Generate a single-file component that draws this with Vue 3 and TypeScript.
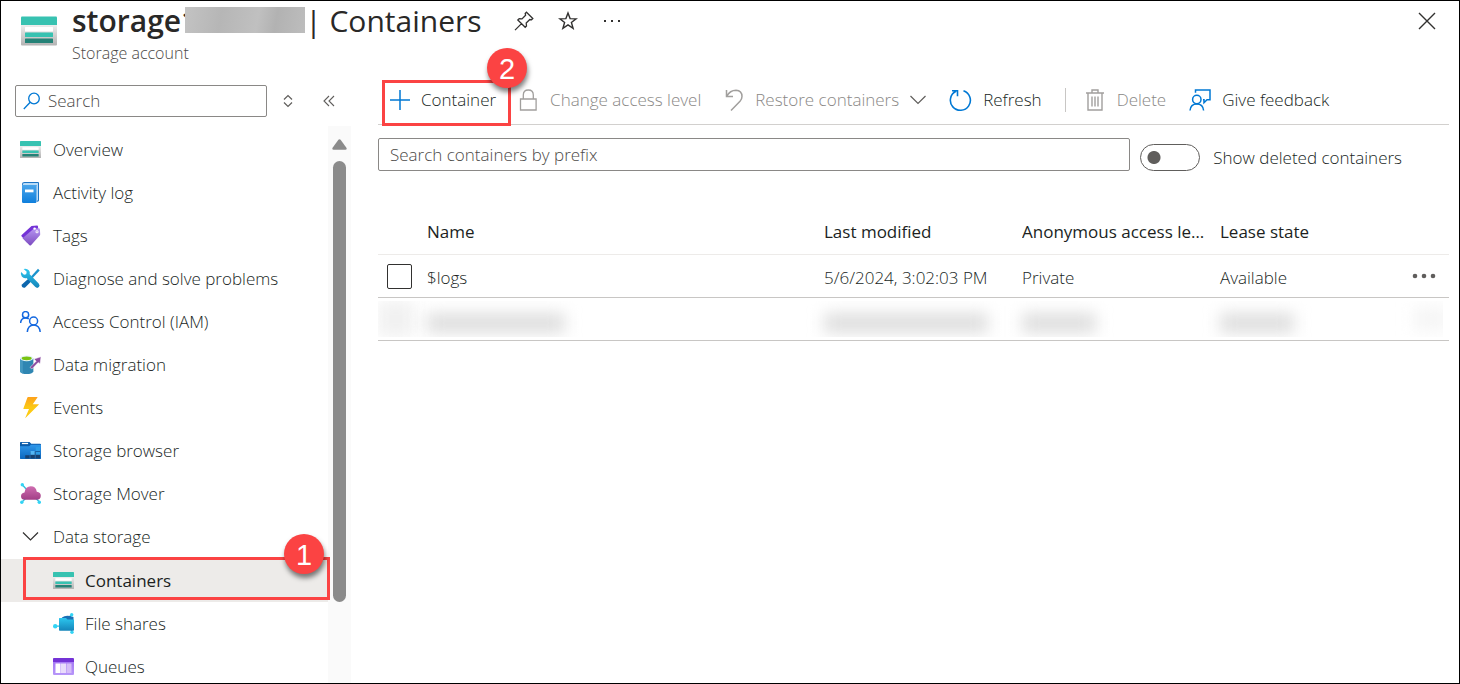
<script setup lang="ts">
import { ref } from 'vue'

interface NavItem {
  label: string
  icon: string
}

interface ContainerRow {
  name: string
  modified: string
  access: string
  lease: string
}

const navItems: NavItem[] = [
  { label: 'Overview', icon: 'storage' },
  { label: 'Activity log', icon: 'log' },
  { label: 'Tags', icon: 'tag' },
  { label: 'Diagnose and solve problems', icon: 'tools' },
  { label: 'Access Control (IAM)', icon: 'people' },
  { label: 'Data migration', icon: 'migration' },
  { label: 'Events', icon: 'bolt' },
  { label: 'Storage browser', icon: 'browser' },
  { label: 'Storage Mover', icon: 'mover' },
]

const storageItems: NavItem[] = [
  { label: 'Containers', icon: 'storage' },
  { label: 'File shares', icon: 'shares' },
  { label: 'Queues', icon: 'queues' },
]

const rows: ContainerRow[] = [
  { name: '$logs', modified: '5/6/2024, 3:02:03 PM', access: 'Private', lease: 'Available' },
]

const current = ref('Containers')
const expanded = ref(true)
const menuFilter = ref('')
const prefix = ref('')
const showDeleted = ref(false)
const selected = ref<string[]>([])
</script>

<template>
  <div class="blade">
    <svg class="sprite" aria-hidden="true">
      <defs>
        <linearGradient id="g-grey" x1="0" y1="0" x2="0" y2="1">
          <stop offset="0" stop-color="#f0f0f0" /><stop offset="1" stop-color="#b3b3b3" />
        </linearGradient>
        <linearGradient id="g-blue" x1="0" y1="0" x2="0" y2="1">
          <stop offset="0" stop-color="#4aa5ea" /><stop offset="1" stop-color="#0f7fdc" />
        </linearGradient>
        <linearGradient id="g-violet" x1="0" y1="0" x2="0" y2="1">
          <stop offset="0" stop-color="#b796f2" /><stop offset="1" stop-color="#7c4bc0" />
        </linearGradient>
        <linearGradient id="g-lilac" x1="0" y1="0" x2="0" y2="1">
          <stop offset="0" stop-color="#a67af4" /><stop offset="1" stop-color="#b796f9" />
        </linearGradient>
        <linearGradient id="g-cyan" x1="0" y1="0" x2="0" y2="1">
          <stop offset="0" stop-color="#2cc6ee" /><stop offset="1" stop-color="#1585ba" />
        </linearGradient>
        <linearGradient id="g-folder" x1="0" y1="0" x2="0" y2="1">
          <stop offset="0" stop-color="#2e96ea" /><stop offset="1" stop-color="#0b66bd" />
        </linearGradient>
        <linearGradient id="g-cloud" x1="0" y1="0" x2="0" y2="1">
          <stop offset="0" stop-color="#cf6db0" /><stop offset="1" stop-color="#a23f86" />
        </linearGradient>
        <linearGradient id="g-bolt" x1="0" y1="0" x2="0" y2="1">
          <stop offset="0" stop-color="#fea11b" /><stop offset=".5" stop-color="#fbc915" /><stop offset="1" stop-color="#ffcb12" />
        </linearGradient>
      </defs>
      <symbol id="i-storage" viewBox="0 0 36 36">
        <path d="M0 11h36v20.500q0 1-1 1H1q-1 0-1-1z" fill="url(#g-grey)" />
        <path d="M1 3.500h34q1 0 1 1V12H0V4.500q0-1 1-1z" fill="#37c2b1" />
        <rect x="4" y="14" width="28" height="4.500" rx=".6" fill="#fff" />
        <rect x="4" y="19.500" width="28" height="4.500" rx=".6" fill="#37c2b1" />
        <rect x="4" y="25.500" width="28" height="4.500" rx=".6" fill="#258277" />
      </symbol>
      <symbol id="i-log" viewBox="0 0 21 21">
        <path d="M4.500 0H18q1 0 1 1v17.500q0 1-1 1l-1.500.5V3.500H2V2Q2 0 4.500 0z" fill="#1c74c4" />
        <path d="M4.500.9H18v17.400l-1.400.7V3H2.700Q2.500.9 4.500.9z" fill="#b9dcf7" />
        <path d="M2 3h14.300v17.200q0 .8-.8.8H3.300Q2 21 2 19.700z" fill="url(#g-blue)" />
        <rect x="5" y="7.500" width="8.500" height="2.800" fill="#fff" />
      </symbol>
      <symbol id="i-tag" viewBox="0 0 21 21">
        <path d="M11.500 1 17 .5q1 0 1 1l.3 4.500L7 17.500l-5.500-6.300q-.5-.7.200-1.200z" fill="#7433d6" />
        <path d="M13.700 3.800 18.800 3.300q1 0 1.100 1l.3 5q0 .8-.5 1.300L11 20.200q-.8.7-1.500 0L2.500 13.300z" fill="url(#g-violet)" />
        <circle cx="14.600" cy="3.600" r="1.200" fill="#fff" />
        <circle cx="17" cy="6.800" r="1.500" fill="#fff" />
        <circle cx="17" cy="6.800" r=".6" fill="#8c58d0" />
      </symbol>
      <symbol id="i-tools" viewBox="0 0 21 21">
        <path d="m18 .8 1.700 1.600-8 8.700-1.600-1.500z" fill="#1b93cd" />
        <path d="m8.900 10.300 2.700 2.700-6.200 6.300q-1.500 1.200-3.200-.2-1.300-1.600 0-2.900z" fill="#0c66ad" />
        <path d="M3.600.9Q6.800 0 8.800 2.200q1.500 1.700.9 4.100l9 9.100q1.700 2 .2 3.700-1.700 1.600-3.500 0L6.500 10Q3.800 10.800 1.800 8.500.2 6.500 1.100 4l2.900 2.700 2.200-.5.500-2.400z" fill="url(#g-cyan)" />
      </symbol>
      <symbol id="i-people" viewBox="0 0 21 21">
        <g fill="none" stroke="#1468e0" stroke-width="1.500">
          <circle cx="5.600" cy="3.700" r="3.100" />
          <path d="M.6 12Q1 7 5.600 7q2 0 3.200 1" />
          <circle cx="13.600" cy="10" r="4" />
          <path d="M7.300 21q.7-7 6.400-7t6.500 7" />
        </g>
      </symbol>
      <symbol id="i-migration" viewBox="0 0 22 21">
        <path d="M0 4v13.800Q1.500 20.500 7 20.500t7-2.700V4z" fill="#2f86b2" />
        <path d="M0 4v13.800q.8 1.500 3 2.100V4z" fill="#4498c0" />
        <ellipse cx="7" cy="4" rx="7" ry="3" fill="#e6f4f9" />
        <ellipse cx="7" cy="4" rx="5.300" ry="2" fill="#7ac312" />
        <path d="m10.500 13.500 6.500-6.500-2.300-2.200L22 2.400l-1 7.200-2-1.200-6.500 6.800z" fill="#8b4aa0" stroke="#fff" stroke-width=".5" />
      </symbol>
      <symbol id="i-bolt" viewBox="0 0 21 21">
        <path d="M8 0h9.200q.6 0 .2.600L12.800 7.200h5.700q.7 0 .2.600L5.700 20.700q-.6.5-.3-.2L9 12H3.800q-.6 0-.4-.5L7.400.4Q7.500 0 8 0z" fill="url(#g-bolt)" />
      </symbol>
      <symbol id="i-browser" viewBox="0 0 22 21">
        <path d="M.8 1.500H10l1.800 2H21q1 0 1 .8V18H0V2.300q0-.8.800-.8z" fill="#0b5cab" />
        <rect x="2" y="2.500" width="6.500" height="1.300" fill="#fff" />
        <path d="M0 6h9.500l2-1.500H22v14q0 1-1 1H1q-1 0-1-1z" fill="url(#g-folder)" />
        <path d="M5.500 15.500h15.500v3.500H5.500zM11 11.500h10v4H11z" fill="#17406f" />
        <path d="M11 11h4.500v4H11z" fill="#52b6f5" />
        <path d="M16.500 6.500H21V11h-4.500zM16.500 12H21v3h-4.500z" fill="#2d9ce6" />
        <path d="M10.500 15.500v3.500M16 11.500v7.500" stroke="#2d79bd" stroke-width=".8" />
      </symbol>
      <symbol id="i-mover" viewBox="0 0 21 21">
        <path d="m2.500 2 5 5.500M2 19l6-6M19.500 19l-6-6" stroke="#32bedd" stroke-width="1.400" />
        <circle cx="2.300" cy="1.800" r="1.700" fill="#32d4f5" />
        <circle cx="1.800" cy="19.300" r="1.700" fill="#32d4f5" />
        <circle cx="19.300" cy="19.300" r="1.700" fill="#32d4f5" />
        <path d="M5 16.800q-4 0-4-3.600 0-3 3.500-3.600Q5.500 3.300 10.800 3.300q5 0 6 5.400 4 .6 4 4.100 0 4-4.300 4z" fill="url(#g-cloud)" />
      </symbol>
      <symbol id="i-shares" viewBox="0 0 21 21">
        <path d="M2 13.200h5M18.500 16v4M14 6l4.500-4" stroke="#32bedd" stroke-width="1.300" />
        <path d="M9 4.500q4-3 11.500-.5v4H8z" fill="#1a6fb5" />
        <circle cx="18.700" cy="1.700" r="1.700" fill="#32d4f5" />
        <circle cx="2.200" cy="13.200" r="2.200" fill="#32d4f5" />
        <circle cx="19" cy="19.300" r="1.700" fill="#32d4f5" />
        <path d="M6.500 5H13l1.500 1.500H21V17q0 .7-.8.700H6.800q-.8 0-.8-.7V5.500q0-.5.500-.5z" fill="url(#g-cyan)" />
      </symbol>
      <symbol id="i-queues" viewBox="0 0 21 21">
        <path d="M0 6h21v12q0 1-1 1H1q-1 0-1-1z" fill="url(#g-lilac)" />
        <path d="M.8 2H20q1 0 1 .8V6H0V2.800Q0 2 .8 2z" fill="#7433d6" />
        <rect x="2.500" y="7.500" width="5" height="9.500" fill="#fff" />
        <rect x="8" y="7.500" width="5" height="9.500" fill="#e9dcfb" />
        <rect x="13.500" y="7.500" width="5" height="9.500" fill="#d6bdf8" />
      </symbol>
    </svg>

    <header class="head">
      <svg class="head-icon" aria-hidden="true"><use href="#i-storage" /></svg>
      <div class="head-text">
        <div class="title-line">
          <h1 class="title"><strong>storage1</strong><span class="mask"></span><span>| Containers</span></h1>
          <div class="title-actions">
            <button type="button" class="plain" aria-label="Pin">
              <svg width="20" height="20" viewBox="0 0 20 20" fill="none" stroke="#323130" stroke-width="1.300">
                <path d="M12.500 1.200 18.800 7.500 17.500 8.800 15.800 8.500 12.200 12.100 12.500 15 11.200 16.300 3.800 8.900 5.200 7.600 8 7.900 11.600 4.200 11.200 2.500zM7.500 12.600 1 19.100" />
              </svg>
            </button>
            <button type="button" class="plain" aria-label="Favorite">
              <svg width="20" height="20" viewBox="0 0 20 20" fill="none" stroke="#323130" stroke-width="1.400">
                <path d="M10 2l2.100 5.600 6 .2-4.700 3.700 1.700 5.800-5.100-3.400-5.100 3.400 1.700-5.800L1.900 7.800l6-.2z" />
              </svg>
            </button>
            <button type="button" class="plain" aria-label="More actions">
              <svg width="20" height="20" viewBox="0 0 20 20" fill="#323130">
                <path d="M2 9h2v2H2zM9 9h2v2H9zM16 9h2v2h-2z" />
              </svg>
            </button>
          </div>
        </div>
        <p class="subtitle">Storage account</p>
      </div>
      <button type="button" class="plain close" aria-label="Close">
        <svg width="18" height="18" viewBox="0 0 18 18" stroke="#323130" stroke-width="1.400">
          <path d="M1 1l16 16M17 1L1 17" />
        </svg>
      </button>
    </header>

    <div class="body">
      <aside class="side">
        <div class="side-tools">
          <label class="side-search">
            <svg width="18" height="18" viewBox="0 0 18 18" fill="none" stroke="#0078d4" stroke-width="1.300">
              <circle cx="11" cy="6.500" r="5.300" /><path d="M7.200 10.300.8 17" />
            </svg>
            <input v-model="menuFilter" type="text" placeholder="Search" aria-label="Search menu" />
          </label>
          <button type="button" class="plain" aria-label="Expand or collapse all">
            <svg width="12" height="14" viewBox="0 0 12 14" fill="none" stroke="#605e5c" stroke-width="1.200">
              <path d="M2 5.500 6 1.500l4 4M2 8.500l4 4 4-4" />
            </svg>
          </button>
          <button type="button" class="plain collapse" aria-label="Collapse menu">
            <svg width="12" height="12" viewBox="0 0 12 12" fill="none" stroke="#605e5c" stroke-width="1.100">
              <path d="M6 1 1 6l5 5M11 1 6 6l5 5" />
            </svg>
          </button>
        </div>

        <div class="side-scroll">
          <nav class="nav" aria-label="Storage account menu">
            <a v-for="item in navItems" :key="item.label" href="#" class="nav-item" @click.prevent="current = item.label">
              <svg class="nav-icon" aria-hidden="true"><use :href="'#i-' + item.icon" /></svg>
              <span>{{ item.label }}</span>
            </a>
            <button type="button" class="nav-item" :aria-expanded="expanded" @click="expanded = !expanded">
              <svg class="nav-icon" viewBox="0 0 21 21" fill="none" stroke="#323130" stroke-width="1.200">
                <path d="M3 6.500l7.500 7.500L18 6.500" />
              </svg>
              <span>Data storage</span>
            </button>
            <div v-if="expanded" class="nav-group">
              <a
                v-for="item in storageItems"
                :key="item.label"
                href="#"
                class="nav-item nested"
                :class="{ active: current === item.label }"
                @click.prevent="current = item.label"
              >
                <svg class="nav-icon" aria-hidden="true"><use :href="'#i-' + item.icon" /></svg>
                <span>{{ item.label }}</span>
                <span v-if="item.label === 'Containers'" class="callout callout-nav"><b class="step">1</b></span>
              </a>
            </div>
          </nav>
          <div class="scrollbar" aria-hidden="true">
            <svg width="15" height="11" viewBox="0 0 15 11">
              <path d="M6.400.8q1.100-1.200 2.200 0l5.800 8q.9 1.900-1 1.900H1.600q-1.900 0-1-1.900z" fill="#8b8b8b" />
            </svg>
            <div class="thumb"></div>
          </div>
        </div>
      </aside>

      <main class="main">
        <div class="toolbar" role="toolbar" aria-label="Container commands">
          <button type="button" class="cmd">
            <svg width="20" height="20" viewBox="0 0 20 20" stroke="#0078d4" stroke-width="1.500"><path d="M10 0v20M0 10h20" /></svg>
            Container
            <span class="callout callout-cmd"><b class="step">2</b></span>
          </button>
          <button type="button" class="cmd" disabled>
            <svg width="20" height="22" viewBox="0 0 20 22" fill="none" stroke="#a19f9d" stroke-width="1.300">
              <path d="M1.500 10h15.600v11H1.500zM4.300 10V6q0-5 5-5t5 5v4" />
            </svg>
            Change access level
          </button>
          <button type="button" class="cmd" disabled>
            <svg width="20" height="22" viewBox="0 0 20 22" fill="none" stroke="#a19f9d" stroke-width="1.500">
              <path d="M2.500 1v6.500H9M2.800 7.200Q6 1.200 12 1.200q6 .3 6 6.300 0 2.500-2 4.800L7 21.500" />
            </svg>
            Restore containers
            <svg width="16" height="10" viewBox="0 0 16 10" fill="none" stroke="#605e5c" stroke-width="1.200">
              <path d="M.5 1 8 8.500 15.500 1" />
            </svg>
          </button>
          <button type="button" class="cmd">
            <svg width="23" height="23" viewBox="0 0 23 23" fill="none" stroke="#0078d4" stroke-width="1.600">
              <path d="M14.500 1.800A10 10 0 1 1 7 2.300M3 1.800h5.500v5.500" />
            </svg>
            Refresh
          </button>
          <span class="divider"></span>
          <button type="button" class="cmd" disabled>
            <svg width="20" height="22" viewBox="0 0 20 22" fill="none" stroke="#a19f9d" stroke-width="1.400">
              <path d="M0 4h18M2 4v17h14V4M6 4V1h6v3M6 7.500v10M9 7.500v10M12 7.500v10" />
            </svg>
            Delete
          </button>
          <button type="button" class="cmd">
            <svg width="22" height="22" viewBox="0 0 22 22" fill="none" stroke="#0078d4" stroke-width="1.500">
              <circle cx="7.800" cy="10.500" r="4.200" />
              <path d="M1 21.500q.6-6.500 6.800-6.500t6.800 6.500M6.500 3.800V1H21v9.800h-3l-3 2.900v-2.900h-1" />
            </svg>
            Give feedback
          </button>
        </div>

        <div class="filters">
          <input v-model="prefix" class="prefix" type="text" placeholder="Search containers by prefix" aria-label="Search containers by prefix" />
          <label class="switch">
            <input v-model="showDeleted" type="checkbox" role="switch" />
            <span>Show deleted containers</span>
          </label>
        </div>

        <table class="grid">
          <colgroup>
            <col class="c-check" /><col /><col class="c-mid" /><col class="c-mid" /><col class="c-lease" /><col class="c-more" />
          </colgroup>
          <thead>
            <tr>
              <th></th>
              <th scope="col">Name</th>
              <th scope="col">Last modified</th>
              <th scope="col">Anonymous access level</th>
              <th scope="col">Lease state</th>
              <th></th>
            </tr>
          </thead>
          <tbody>
            <tr v-for="row in rows" :key="row.name">
              <td class="check"><input v-model="selected" type="checkbox" :value="row.name" :aria-label="'Select ' + row.name" /></td>
              <td class="value">{{ row.name }}</td>
              <td class="value">{{ row.modified }}</td>
              <td class="value">{{ row.access }}</td>
              <td class="value">{{ row.lease }}</td>
              <td class="more">
                <button type="button" class="plain" aria-label="Row actions">
                  <svg width="24" height="6" viewBox="0 0 24 6" fill="#605e5c">
                    <circle cx="3" cy="3" r="2.300" /><circle cx="12" cy="3" r="2.300" /><circle cx="21" cy="3" r="2.300" />
                  </svg>
                </button>
              </td>
            </tr>
            <tr>
              <td><div class="clip clip-start"><i class="blob box"></i></div></td>
              <td><div class="clip"><i class="blob name"></i></div></td>
              <td><div class="clip"><i class="blob date"></i></div></td>
              <td><div class="clip"><i class="blob word"></i></div></td>
              <td><div class="clip"><i class="blob word"></i></div></td>
              <td><div class="clip clip-end"><i class="blob dots"></i></div></td>
            </tr>
          </tbody>
        </table>
      </main>
    </div>
  </div>
</template>

<style>
body {
  margin: 0;
  background: #fff;
}
</style>

<style scoped>
.blade {
  box-sizing: border-box;
  height: 100vh;
  display: flex;
  flex-direction: column;
  overflow: hidden;
  border: 1px solid #000;
  background: #fff;
  color: #201f1e;
  font-family: "Segoe UI", "Open Sans", "Noto Sans", sans-serif;
  font-size: 17px;
  font-weight: 300;
  line-height: 24px;
}
.sprite {
  position: absolute;
  width: 0;
  height: 0;
}
svg {
  display: block;
  flex: none;
}
button,
input {
  font: inherit;
  color: inherit;
}
.plain {
  display: flex;
  padding: 0;
  border: 0;
  background: none;
}

.head {
  display: flex;
  align-items: flex-start;
  flex: none;
  height: 75px;
  padding: 0 23px 0 20px;
}
.head-icon {
  width: 36px;
  height: 36px;
  margin-top: 12px;
}
.head-text {
  flex: 1;
  margin-left: 15px;
}
.title-line {
  display: flex;
  align-items: center;
  height: 40px;
}
.title {
  display: flex;
  align-items: center;
  margin: 0;
  font-size: 30px;
  line-height: 40px;
  font-weight: 400;
  color: #292827;
  white-space: nowrap;
}
.title strong {
  font-weight: 600;
}
.mask {
  position: relative;
  width: 120px;
  height: 26px;
  margin: 0 0 2px -13px;
  background: linear-gradient(100deg, #c3c3c3, #b6b6b6 30%, #c0c0c0 60%, #b2b2b2 75%, #bdbdbd);
}
.title-actions {
  display: flex;
  gap: 24px;
  margin-left: 32px;
}
.subtitle {
  margin: 0;
  font-size: 16px;
  color: #4c4a48;
}
.close {
  margin-top: 11px;
}

.body {
  flex: 1;
  min-height: 0;
  display: flex;
}
.side {
  flex: none;
  width: 350px;
  display: flex;
  flex-direction: column;
}
.side-tools {
  flex: none;
  display: flex;
  align-items: center;
  height: 50px;
  padding-left: 14px;
}
.side-search {
  box-sizing: border-box;
  display: flex;
  align-items: center;
  gap: 7px;
  width: 252px;
  height: 32px;
  margin-right: 15px;
  padding: 0 7px;
  border: 1px solid #8a8886;
  border-radius: 2px;
}
.side-search input {
  flex: 1;
  min-width: 0;
  padding: 0;
  border: 0;
  outline: 0;
  background: none;
}
input::placeholder {
  color: #4c4a48;
  opacity: 1;
}
.collapse {
  margin-left: 29px;
}
.side-scroll {
  flex: 1;
  min-height: 0;
  display: flex;
}
.nav {
  flex: 1;
  padding-top: 2px;
}
.nav-item {
  position: relative;
  box-sizing: border-box;
  display: flex;
  align-items: center;
  gap: 12px;
  width: 100%;
  height: 43px;
  padding: 0 0 0 19px;
  border: 0;
  background: none;
  color: inherit;
  text-align: left;
  text-decoration: none;
}
.nav-icon {
  width: 21px;
  height: 21px;
}
.nav-group {
  padding-top: 1px;
}
.nested {
  gap: 11px;
  padding-left: 52px;
}
.active {
  background: #edebe9;
  font-weight: 500;
}
.scrollbar {
  flex: none;
  width: 23px;
  box-sizing: border-box;
  display: flex;
  flex-direction: column;
  align-items: center;
  gap: 11px;
  padding-top: 13px;
  background: #fafafa;
}
.thumb {
  width: 13px;
  height: 81%;
  border-radius: 7px;
  background: #8b8b8b;
}

.callout {
  position: absolute;
  box-sizing: border-box;
  border: 3px solid #fb4343;
  pointer-events: none;
}
.callout-nav {
  inset: -2px -2px 2px 22px;
  z-index: 2;
}
.callout-cmd {
  inset: 4px -15px -2px -8px;
}
.step {
  position: absolute;
  top: -26px;
  right: 3px;
  width: 40px;
  height: 40px;
  border-radius: 50%;
  background: #fb4343;
  box-shadow: 1px 4px 5px rgba(0, 0, 0, 0.5);
  color: #fff;
  font: 400 29px/42px "Liberation Sans", Arial, sans-serif;
  text-align: center;
}
.callout-cmd .step {
  top: -35px;
  right: -19px;
}

.main {
  flex: 1;
  min-width: 0;
  padding: 0 10px 0 27px;
}
.toolbar {
  display: flex;
  align-items: center;
  height: 48px;
  padding-left: 12px;
  border-bottom: 1px solid #d2d0ce;
}
.cmd {
  position: relative;
  display: flex;
  align-items: center;
  gap: 11px;
  height: 48px;
  margin-right: 23px;
  padding: 0;
  border: 0;
  background: none;
  white-space: nowrap;
}
.cmd:disabled {
  color: #8a8886;
}
.divider {
  width: 1px;
  height: 24px;
  margin-right: 20px;
  background: #c8c6c4;
}
.filters {
  display: flex;
  align-items: flex-start;
  gap: 10px;
  padding: 13px 47px 0 0;
}
.prefix {
  box-sizing: border-box;
  flex: 1;
  min-width: 0;
  height: 33px;
  padding: 0 11px;
  border: 1px solid #8a8886;
  border-radius: 2px;
  background: none;
}
.switch {
  display: flex;
  align-items: center;
  gap: 13px;
  padding-top: 6px;
  white-space: nowrap;
}
.switch input {
  appearance: none;
  box-sizing: border-box;
  width: 60px;
  height: 27px;
  margin: 0;
  border: 1px solid #605e5c;
  border-radius: 14px;
  background: radial-gradient(circle at 13px 50%, #605e5c 6px, transparent 7px);
}
.switch input:checked {
  background: radial-gradient(circle at 45px 50%, #0078d4 6px, transparent 7px);
}

.grid {
  width: 100%;
  margin-top: 39px;
  table-layout: fixed;
  border-collapse: collapse;
}
.c-check {
  width: 49px;
}
.c-mid {
  width: 198px;
}
.c-lease {
  width: 180px;
}
.c-more {
  width: 49px;
}
th {
  height: 44px;
  padding: 0 12px 0 0;
  border-bottom: 1px solid #edebe9;
  font-weight: 500;
  text-align: left;
  white-space: nowrap;
  overflow: hidden;
  text-overflow: ellipsis;
}
td {
  height: 42px;
  padding: 0;
  border-bottom: 1px solid #c8c6c4;
  white-space: nowrap;
}
.value {
  box-sizing: border-box;
  height: 43px;
  padding-top: 3px;
}
.check input {
  appearance: none;
  display: block;
  box-sizing: border-box;
  width: 25px;
  height: 25px;
  margin: 0 0 0 9px;
  border: 1px solid #323130;
  border-radius: 2px;
  background: #fff;
}
.check input:checked {
  background: #0078d4;
}
.more .plain {
  margin-left: auto;
  padding-right: 13px;
}
.clip {
  display: flex;
  align-items: center;
  height: 36px;
  clip-path: inset(0 -20px);
}
.clip-start {
  clip-path: inset(0 -20px 0 0);
}
.clip-end {
  justify-content: flex-end;
  clip-path: inset(0 6px 0 -20px);
}
.blob {
  height: 20px;
  margin-top: 8px;
  background: #dedede;
  filter: blur(8px);
}
.name {
  width: 138px;
}
.date {
  width: 164px;
}
.word {
  width: 74px;
}
.box {
  width: 36px;
  height: 36px;
  margin-top: 0;
  background: #f1f1f1;
}
.dots {
  width: 36px;
  height: 24px;
  margin-top: 0;
  background: #f6f6f6;
}
</style>
